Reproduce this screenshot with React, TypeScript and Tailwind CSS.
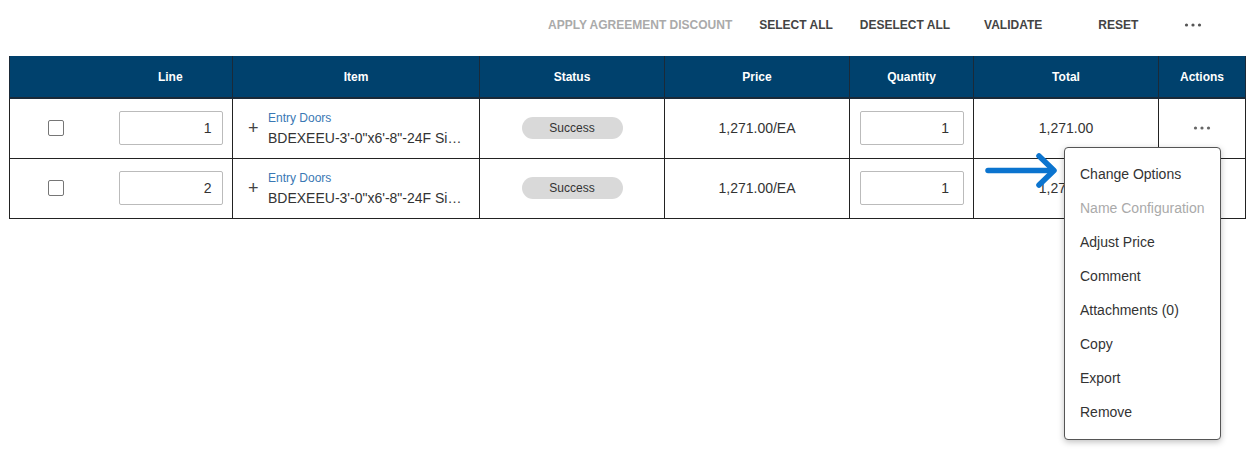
import React from "react";

const rows = [
  { line: "1", qty: "1" },
  { line: "2", qty: "1" },
];

const menuItems = [
  { label: "Change Options", disabled: false },
  { label: "Name Configuration", disabled: true },
  { label: "Adjust Price", disabled: false },
  { label: "Comment", disabled: false },
  { label: "Attachments (0)", disabled: false },
  { label: "Copy", disabled: false },
  { label: "Export", disabled: false },
  { label: "Remove", disabled: false },
];

function Dots({ className }: { className?: string }) {
  return (
    <svg width="18" height="4" viewBox="0 0 18 4" className={className}>
      <circle cx="2.5" cy="2" r="1.6" fill="currentColor" />
      <circle cx="9" cy="2" r="1.6" fill="currentColor" />
      <circle cx="15.5" cy="2" r="1.6" fill="currentColor" />
    </svg>
  );
}

export default function App() {
  return (
    <div
      className="relative w-[1252px] h-[449px] bg-white overflow-hidden text-[#333]"
      style={{ fontFamily: '"Liberation Sans", Arial, sans-serif' }}
    >
      {/* Toolbar */}
      <div className="flex items-center h-[48px] pt-[1px] pl-[548px] text-[12px] font-bold uppercase">
        <span className="text-[#aaa]">Apply Agreement Discount</span>
        <span className="ml-[27px] text-[#444]">Select All</span>
        <span className="ml-[27px] text-[#444]">Deselect All</span>
        <span className="ml-[34px] text-[#444]">Validate</span>
        <span className="ml-[56px] text-[#444]">Reset</span>
        <Dots className="ml-[46px] text-[#555]" />
      </div>

      {/* Table */}
      <table className="ml-[9px] mt-[8px] table-fixed border-collapse w-[1236px] text-[14px]">
        <colgroup>
          <col className="w-[99px]" />
          <col className="w-[124px]" />
          <col className="w-[247px]" />
          <col className="w-[185px]" />
          <col className="w-[185px]" />
          <col className="w-[124px]" />
          <col className="w-[185px]" />
          <col className="w-[87px]" />
        </colgroup>
        <thead>
          <tr className="bg-[#00416d] text-white text-[12px] font-bold h-[42px] border-b-2 border-[#1b2a38]">
            <th className="border-l border-[#1b2a38]"></th>
            <th className="font-bold">Line</th>
            <th className="border-l border-[#1b2a38] font-bold">Item</th>
            <th className="border-l border-[#1b2a38] font-bold">Status</th>
            <th className="border-l border-[#1b2a38] font-bold">Price</th>
            <th className="border-l border-[#1b2a38] font-bold">Quantity</th>
            <th className="border-l border-[#1b2a38] font-bold">Total</th>
            <th className="border-l border-r border-[#1b2a38] font-bold">Actions</th>
          </tr>
        </thead>
        <tbody>
          {rows.map((r, i) => (
            <tr key={i} className="h-[60px] border-b border-[#222]">
              <td className="border-l border-[#222] p-0">
                <div className="flex justify-center pr-[6px]">
                  <span className="block w-[16px] h-[16px] rounded-[2px] border border-[#767676] bg-white" />
                </div>
              </td>
              <td className="p-0 pl-[10px] pr-[10px]">
                <div className="h-[34px] w-[104px] border border-[#bbb] rounded-[2px] flex items-center justify-end pr-[10px] text-[14px] text-[#333]">
                  {r.line}
                </div>
              </td>
              <td className="border-l border-[#222] p-0 pl-[15px] pr-[16px]">
                <div className="flex items-center">
                  <span className="text-[18px] leading-none text-[#444] w-[20px] -mt-[1px]">+</span>
                  <div className="min-w-0 flex-1 mt-[2px]">
                    <div className="text-[12px] text-[#3a78b4] leading-[14px]">Entry Doors</div>
                    <div className="truncate text-[14px] text-[#333] leading-[18px] mt-[4px]">
                      BDEXEEU-3'-0"x6'-8"-24F Single Entry Door
                    </div>
                  </div>
                </div>
              </td>
              <td className="border-l border-[#222] p-0">
                <div className="flex justify-center pl-[0px]">
                  <span className="w-[101px] h-[22px] rounded-full bg-[#d9d9d9] text-[12px] text-[#333] flex items-center justify-center">
                    Success
                  </span>
                </div>
              </td>
              <td className="border-l border-[#222] text-center text-[#333]">1,271.00/EA</td>
              <td className="border-l border-[#222] p-0 pl-[10px] pr-[10px]">
                <div className="h-[34px] w-[104px] border border-[#bbb] rounded-[2px] flex items-center justify-end pr-[14px] text-[14px] text-[#333]">
                  {r.qty}
                </div>
              </td>
              <td className="border-l border-[#222] text-center text-[#333]">1,271.00</td>
              <td className="border-l border-r border-[#222] text-center">
                {i === 0 && (
                  <div className="flex justify-center pr-[1px]">
                    <Dots className="text-[#666]" />
                  </div>
                )}
              </td>
            </tr>
          ))}
        </tbody>
      </table>

      {/* Arrow annotation */}
      <svg
        className="absolute left-[984px] top-[151px]"
        width="76"
        height="40"
        viewBox="0 0 76 40"
      >
        <path
          d="M4 19.5 L68 19.5"
          stroke="#0b74cf"
          strokeWidth="5.5"
          strokeLinecap="round"
          fill="none"
        />
        <path
          d="M55 5 L70 19.5 L55 34"
          stroke="#0b74cf"
          strokeWidth="5.5"
          strokeLinecap="round"
          strokeLinejoin="round"
          fill="none"
        />
      </svg>

      {/* Context menu */}
      <div className="absolute left-[1064px] top-[147px] w-[157px] h-[293px] bg-white border border-[#555] rounded-[4px] shadow-[0_2px_6px_rgba(0,0,0,0.25)] pt-[9px]">
        {menuItems.map((m) => (
          <div
            key={m.label}
            className={`h-[34px] flex items-center pl-[15px] text-[14px] ${m.disabled ? "text-[#aaa]" : "text-[#333]"}`}
          >
            {m.label}
          </div>
        ))}
      </div>
    </div>
  );
}
